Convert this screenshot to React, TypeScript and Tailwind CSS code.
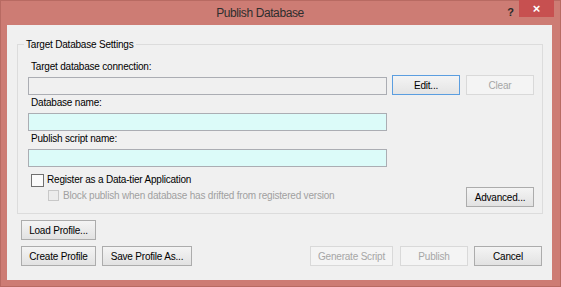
import React from "react";

const font = "font-['Liberation_Sans',Arial,sans-serif]";

function Btn({
  children,
  className = "",
  disabled = false,
  focused = false,
}: {
  children: React.ReactNode;
  className?: string;
  disabled?: boolean;
  focused?: boolean;
}) {
  const base =
    "h-[20px] flex items-center justify-center text-[10px] tracking-[-0.2px] border shrink-0";
  const style = disabled
    ? "border-[#d9d9d9] bg-[#f4f4f4] text-[#a6a6a6]"
    : focused
    ? "border-[#5b9ee0] bg-linear-to-b from-[#f4f4f4] to-[#e4e4e4] text-black"
    : "border-[#acacac] bg-linear-to-b from-[#f4f4f4] to-[#e2e2e2] text-black";
  return <div className={`${base} ${style} ${className}`}>{children}</div>;
}

export default function App() {
  return (
    <div
      className={`w-[561px] h-[287px] bg-[#cd7c74] border border-[#b86a62] flex flex-col ${font}`}
    >
      {/* Title bar */}
      <div className="relative h-[24px] flex shrink-0">
        <div className="flex-1 flex items-center justify-center text-[12px] tracking-[-0.4px] text-[#2e2e2e] pb-[1px]">
          Publish Database
        </div>
        <div className="absolute right-[46px] top-[3px] text-[11px] font-bold text-[#2a2a2a]">
          ?
        </div>
        <div className="w-[35px] h-[17px] mr-[6px] -mt-[1px] bg-[#c75050] flex items-center justify-center text-white text-[13px] font-bold leading-none">
          ×
        </div>
      </div>

      {/* Content */}
      <div className="ml-[6px] mr-[8px] mb-[6px] flex-1 bg-[#f0f0f0] flex flex-col">
        {/* Group box */}
        <div className="relative mt-[19px] ml-[10px] mr-[9px] border border-[#dcdcdc] pl-[10px] pr-[8px] pt-[14px] pb-[6px] text-[10px] tracking-[-0.2px] text-black">
          <div className="absolute -top-[8px] left-[6px] px-[2px] bg-[#f0f0f0] leading-[16px]">
            Target Database Settings
          </div>

          <div className="h-[16px] leading-[16px] pl-[3px]">
            Target database connection:
          </div>
          <div className="flex items-end">
            <div className="w-[359px] h-[18px] border border-[#abadb3] bg-[#f0f0f0]" />
            <Btn focused className="ml-[5px] w-[68px]">
              Edit...
            </Btn>
            <Btn disabled className="ml-[6px] w-[68px]">
              Clear
            </Btn>
          </div>

          <div className="h-[16px] leading-[16px] pl-[3px]">Database name:</div>
          <div className="mt-[2px] w-[359px] h-[18px] border border-[#abadb3] bg-[#dcfbf9]" />

          <div className="h-[16px] leading-[16px] pl-[3px]">
            Publish script name:
          </div>
          <div className="mt-[2px] w-[359px] h-[18px] border border-[#abadb3] bg-[#dcfbf9]" />

          <div className="mt-[5px] h-[16px] flex items-center pl-[3px]">
            <div className="w-[13px] h-[13px] border border-[#707070] bg-[#fbfbfb]" />
            <span className="ml-[3px] leading-[16px]">
              Register as a Data-tier Application
            </span>
          </div>

          <div className="flex justify-between items-start">
            <div className="mt-[1px] h-[13px] flex items-center pl-[20px] text-[#a0a0a0]">
              <div className="w-[11px] h-[11px] border border-[#c8c8c8] bg-[#ececec]" />
              <span className="ml-[4px]">
                Block publish when database has drifted from registered version
              </span>
            </div>
            <Btn className="-mt-[1px] w-[68px]">Advanced...</Btn>
          </div>
        </div>

        {/* Bottom buttons */}
        <div className="mt-[6px] ml-[14px] flex">
          <Btn className="w-[75px]">Load Profile...</Btn>
        </div>
        <div className="mt-[6px] ml-[14px] mr-[10px] flex">
          <Btn className="w-[75px]">Create Profile</Btn>
          <Btn className="ml-[6px] w-[90px]">Save Profile As...</Btn>
          <div className="flex-1" />
          <Btn disabled className="w-[83px]">
            Generate Script
          </Btn>
          <Btn disabled className="ml-[7px] w-[68px]">
            Publish
          </Btn>
          <Btn className="ml-[6px] w-[68px]">Cancel</Btn>
        </div>
      </div>
    </div>
  );
}
